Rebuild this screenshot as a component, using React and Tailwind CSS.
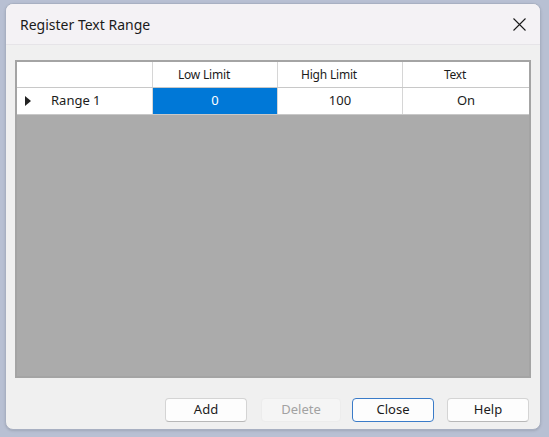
import React from 'react';

const columns = [
    { key: 'low', title: 'Low Limit', width: 'w-[125px]' },
    { key: 'high', title: 'High Limit', width: 'w-[125px]' },
    { key: 'text', title: 'Text', width: 'w-[126px]' },
];

const rows = [{ id: 1, name: 'Range 1', low: '0', high: '100', text: 'On' }];

const CloseIcon = () => (
    <svg width="13" height="13" viewBox="0 0 13 13" fill="none" stroke="#1a1a1a" strokeWidth="1.1">
        <path d="M0.5 0.5 L12.5 12.5 M12.5 0.5 L0.5 12.5" />
    </svg>
);

const RowArrow = () => (
    <svg width="6" height="10" viewBox="0 0 6 10">
        <path d="M0 0 L6 5 L0 10 Z" fill="#222" />
    </svg>
);

const DialogButton = ({ children, disabled, primary, className = '' }) => (
    <button
        disabled={disabled}
        className={`h-[24px] text-[13px] rounded-[4px] border ${
            disabled
                ? 'bg-[#f5f5f5] border-[#ececec] text-[#a2a2a2]'
                : primary
                ? 'bg-[#fdfdfd] border-[#3a7bc8] text-[#1b1b1b]'
                : 'bg-[#fdfdfd] border-[#d4d4d4] border-b-[#b8b8b8] text-[#1b1b1b]'
        } ${className}`}
    >
        {children}
    </button>
);

export default function App() {
    return (
        <div
            className="w-[549px] h-[437px] bg-[#b8c0d3] pl-[5px] pt-[3px]"
            style={{ fontFamily: '"Noto Sans", "Open Sans", sans-serif' }}
        >
            <div className="w-[536px] h-[427px] rounded-[8px] border border-[#a8b0c2] bg-[#f0f0f0] flex flex-col overflow-hidden shadow-sm">
                {/* Title bar */}
                <div className="h-[41px] bg-[#f4f2f5] border-b border-[#e6e4e8] flex items-center justify-between pl-[14px] pr-[14px]">
                    <span className="text-[14px] text-[#1a1a1a]">Register Text Range</span>
                    <CloseIcon />
                </div>

                <div className="flex-1 flex flex-col pl-[9px] pt-[15px]">
                    {/* Range grid */}
                    <div className="w-[516px] h-[318px] border-2 border-[#a4a4a4] bg-[#ababab] flex flex-col">
                        <div className="flex h-[26px] bg-white border-b border-[#c8c8c8] text-[12px] text-[#1b1b1b] tracking-[-0.2px]">
                            <div className="w-[136px] border-r border-[#d6d6d6]" />
                            {columns.map((col, i) => (
                                <div
                                    key={col.key}
                                    className={`${col.width} flex items-center justify-center pr-[22px] ${i < columns.length - 1 ? 'border-r border-[#d6d6d6]' : ''}`}
                                >
                                    {col.title}
                                </div>
                            ))}
                        </div>
                        {rows.map((row) => (
                            <div key={row.id} className="flex h-[27px] bg-white border-b border-[#c8c8c8] text-[13px] text-[#1b1b1b]">
                                <div className="w-[136px] border-r border-[#d6d6d6] flex items-center pl-[8px]">
                                    <RowArrow />
                                    <span className="ml-[20px]">{row.name}</span>
                                </div>
                                <div className="w-[125px] border-r border-[#d6d6d6] bg-[#0078d7] text-white flex items-center justify-center">
                                    {row.low}
                                </div>
                                <div className="w-[125px] border-r border-[#d6d6d6] flex items-center justify-center">
                                    {row.high}
                                </div>
                                <div className="w-[126px] flex items-center justify-center">{row.text}</div>
                            </div>
                        ))}
                    </div>

                    {/* Dialog buttons */}
                    <div className="flex mt-[20px] pl-[150px]">
                        <DialogButton className="w-[82px]">Add</DialogButton>
                        <DialogButton disabled className="w-[80px] ml-[14px]">Delete</DialogButton>
                        <DialogButton primary className="w-[82px] ml-[11px]">Close</DialogButton>
                        <DialogButton className="w-[82px] ml-[13px]">Help</DialogButton>
                    </div>
                </div>
            </div>
        </div>
    );
}
